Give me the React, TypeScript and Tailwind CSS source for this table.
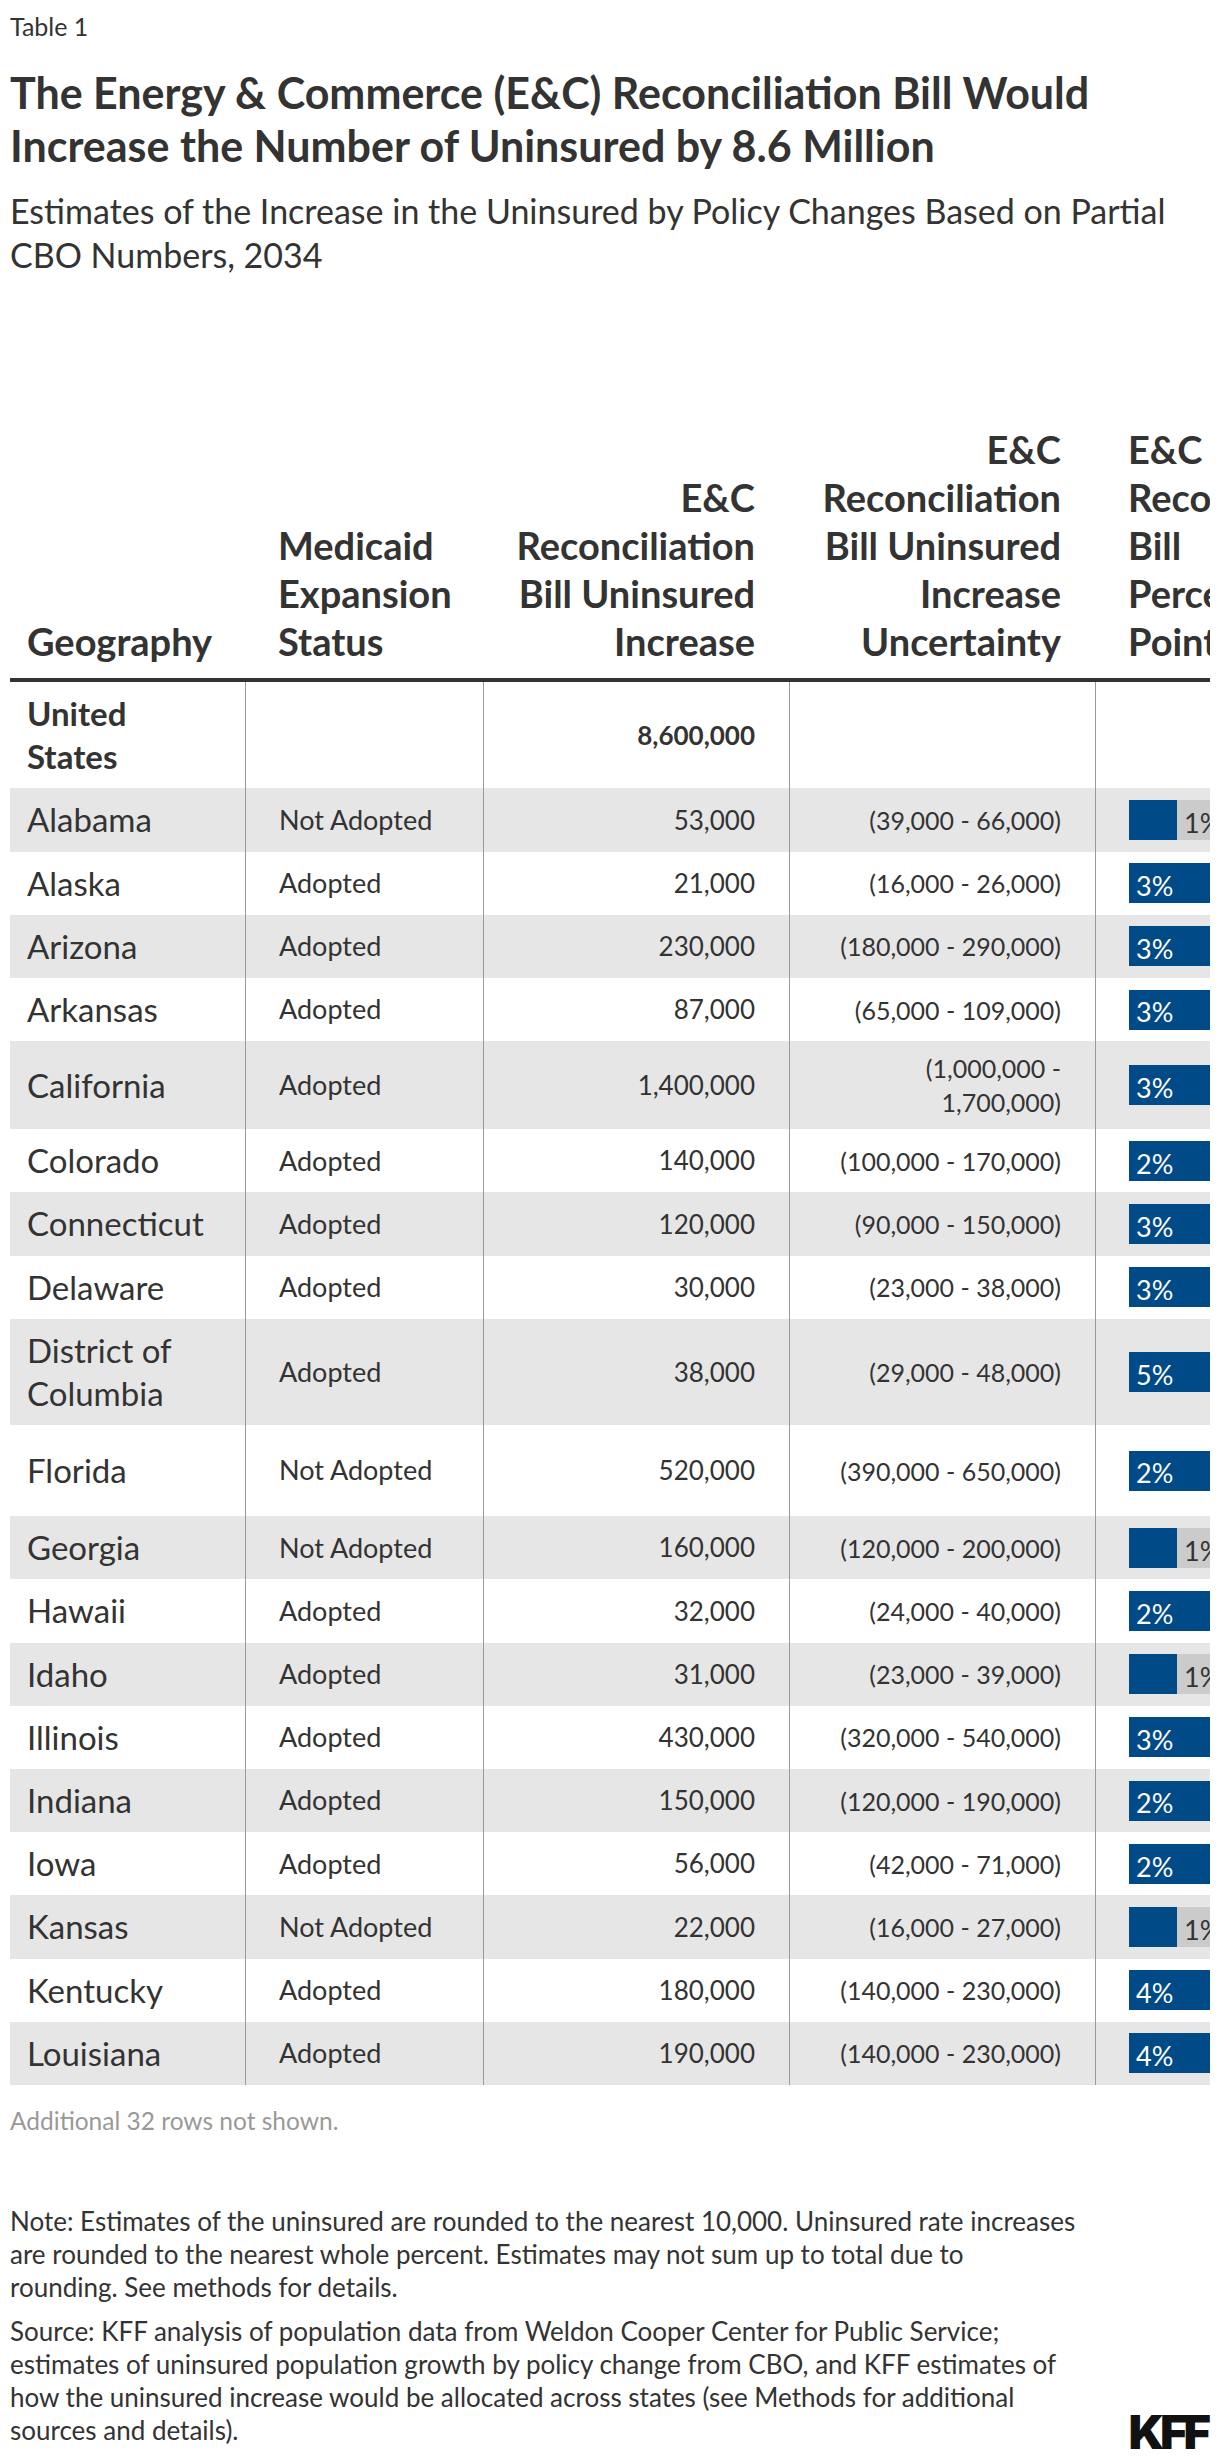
import React from 'react'

type Row = {
  geo: string[]
  status: string
  inc: string
  unc: string[]
  pct: number
  bold?: boolean
  tall?: boolean
}

const rows: Row[] = [
  { geo: ['United', 'States'], status: '', inc: '8,600,000', unc: [], pct: 0, bold: true },
  { geo: ['Alabama'], status: 'Not Adopted', inc: '53,000', unc: ['(39,000 - 66,000)'], pct: 1 },
  { geo: ['Alaska'], status: 'Adopted', inc: '21,000', unc: ['(16,000 - 26,000)'], pct: 3 },
  { geo: ['Arizona'], status: 'Adopted', inc: '230,000', unc: ['(180,000 - 290,000)'], pct: 3 },
  { geo: ['Arkansas'], status: 'Adopted', inc: '87,000', unc: ['(65,000 - 109,000)'], pct: 3 },
  { geo: ['California'], status: 'Adopted', inc: '1,400,000', unc: ['(1,000,000 -', '1,700,000)'], pct: 3 },
  { geo: ['Colorado'], status: 'Adopted', inc: '140,000', unc: ['(100,000 - 170,000)'], pct: 2 },
  { geo: ['Connecticut'], status: 'Adopted', inc: '120,000', unc: ['(90,000 - 150,000)'], pct: 3 },
  { geo: ['Delaware'], status: 'Adopted', inc: '30,000', unc: ['(23,000 - 38,000)'], pct: 3 },
  { geo: ['District of', 'Columbia'], status: 'Adopted', inc: '38,000', unc: ['(29,000 - 48,000)'], pct: 5 },
  { geo: ['Florida'], status: 'Not Adopted', inc: '520,000', unc: ['(390,000 - 650,000)'], pct: 2, tall: true },
  { geo: ['Georgia'], status: 'Not Adopted', inc: '160,000', unc: ['(120,000 - 200,000)'], pct: 1 },
  { geo: ['Hawaii'], status: 'Adopted', inc: '32,000', unc: ['(24,000 - 40,000)'], pct: 2 },
  { geo: ['Idaho'], status: 'Adopted', inc: '31,000', unc: ['(23,000 - 39,000)'], pct: 1 },
  { geo: ['Illinois'], status: 'Adopted', inc: '430,000', unc: ['(320,000 - 540,000)'], pct: 3 },
  { geo: ['Indiana'], status: 'Adopted', inc: '150,000', unc: ['(120,000 - 190,000)'], pct: 2 },
  { geo: ['Iowa'], status: 'Adopted', inc: '56,000', unc: ['(42,000 - 71,000)'], pct: 2 },
  { geo: ['Kansas'], status: 'Not Adopted', inc: '22,000', unc: ['(16,000 - 27,000)'], pct: 1 },
  { geo: ['Kentucky'], status: 'Adopted', inc: '180,000', unc: ['(140,000 - 230,000)'], pct: 4 },
  { geo: ['Louisiana'], status: 'Adopted', inc: '190,000', unc: ['(140,000 - 230,000)'], pct: 4 },
]

function Lines({ lines }: { lines: string[] }) {
  return (
    <>
      {lines.map((l) => (
        <span key={l} className="block whitespace-nowrap">
          {l}
        </span>
      ))}
    </>
  )
}

function Bar({ pct }: { pct: number }) {
  if (!pct) return null
  const inside = pct > 1
  return (
    <div className="flex h-[40px] w-[260px] bg-[#cbcbcb]">
      <div
        className="flex h-full items-center bg-[#004a88] pl-[7px] text-white"
        style={{ width: pct * 48 }}
      >
        {inside && <span className="pt-[6px]">{pct}%</span>}
      </div>
      {!inside && <span className="flex items-center pl-[7px] pt-[6px] text-[#333]">{pct}%</span>}
    </div>
  )
}

function TableRow({ r, i }: { r: Row; i: number }) {
  const bg = i % 2 === 1 ? 'bg-[#e6e6e6]' : 'bg-white'
  return (
    <div
      className={`grid grid-cols-[235px_238px_306px_306px_320px] ${bg} ${r.tall ? 'min-h-[91px]' : ''}`}
    >
      <div
        className={`flex flex-col justify-center py-[10px] pl-[17px] text-[33px] leading-[43.2px] ${r.bold ? 'font-bold' : ''}`}
      >
        <Lines lines={r.geo} />
      </div>
      <div className="flex items-center border-l border-[#9a9a9a] pl-[33px] text-[27px]">{r.status}</div>
      <div
        className={`flex items-center justify-end border-l border-[#9a9a9a] pr-[34px] text-[26px] ${r.bold ? 'font-bold' : ''}`}
      >
        {r.inc}
      </div>
      <div className="flex flex-col items-end justify-center border-l border-[#9a9a9a] py-[10px] pr-[34px] text-right text-[25px] leading-[34px]">
        <Lines lines={r.unc} />
      </div>
      <div className="flex items-center border-l border-[#9a9a9a] pl-[33px] text-[27px]">
        <Bar pct={r.pct} />
      </div>
    </div>
  )
}

const headers: { lines: string[]; right?: boolean }[] = [
  { lines: ['Geography'] },
  { lines: ['Medicaid', 'Expansion', 'Status'] },
  { lines: ['E&C', 'Reconciliation', 'Bill Uninsured', 'Increase'], right: true },
  { lines: ['E&C', 'Reconciliation', 'Bill Uninsured', 'Increase', 'Uncertainty'], right: true },
  { lines: ['E&C', 'Reconciliation', 'Bill', 'Percentage', 'Point Increase'] },
]

export default function App() {
  return (
    <div className="w-[1220px] bg-white px-[10px] font-['Lato','Noto_Sans',sans-serif] text-[#333]">
      <div className="pt-[8px] text-[25px] leading-[36px]">Table 1</div>
      <h1 className="mt-[22px] text-[43px] font-bold leading-[53px]">
        <span className="block">The Energy &amp; Commerce (E&amp;C) Reconciliation Bill Would</span>
        <span className="block">Increase the Number of Uninsured by 8.6 Million</span>
      </h1>
      <p className="mt-[17px] text-[34px] leading-[44px]">
        <span className="block">Estimates of the Increase in the Uninsured by Policy Changes Based on Partial</span>
        <span className="block">CBO Numbers, 2034</span>
      </p>

      <div className="mt-[148px] w-[1200px] overflow-hidden">
        <div className="grid w-[1405px] grid-cols-[235px_238px_306px_306px_320px] items-end border-b-[4px] border-[#333] text-[38px] font-bold leading-[48px]">
          {headers.map((h, i) => (
            <div
              key={i}
              className={`pb-[13px] ${i === 0 ? 'pl-[17px]' : ''} ${i === 1 || i === 4 ? 'pl-[33px]' : ''} ${h.right ? 'pr-[34px] text-right' : ''}`}
            >
              <Lines lines={h.lines} />
            </div>
          ))}
        </div>
        <div className="w-[1405px]">
          {rows.map((r, i) => (
            <TableRow key={r.geo.join(' ')} r={r} i={i} />
          ))}
        </div>
      </div>

      <div className="mt-[20px] text-[24.5px] leading-[32px] text-[#999]">Additional 32 rows not shown.</div>

      <div className="mt-[68px] flex items-end justify-between pb-[11px] text-[26px] leading-[33px]">
        <div>
          <p>
            <span className="block">Note: Estimates of the uninsured are rounded to the nearest 10,000. Uninsured rate increases</span>
            <span className="block">are rounded to the nearest whole percent. Estimates may not sum up to total due to</span>
            <span className="block">rounding. See methods for details.</span>
          </p>
          <p className="mt-[11px]">
            <span className="block">Source: KFF analysis of population data from Weldon Cooper Center for Public Service;</span>
            <span className="block">estimates of uninsured population growth by policy change from CBO, and KFF estimates of</span>
            <span className="block">how the uninsured increase would be allocated across states (see Methods for additional</span>
            <span className="block">sources and details).</span>
          </p>
        </div>
        <div className="mb-[-2px] mr-[3px] font-['Inter','Liberation_Sans',sans-serif] text-[47px] font-black leading-[34px] tracking-[-4px] text-[#111]">
          KFF
        </div>
      </div>
    </div>
  )
}
